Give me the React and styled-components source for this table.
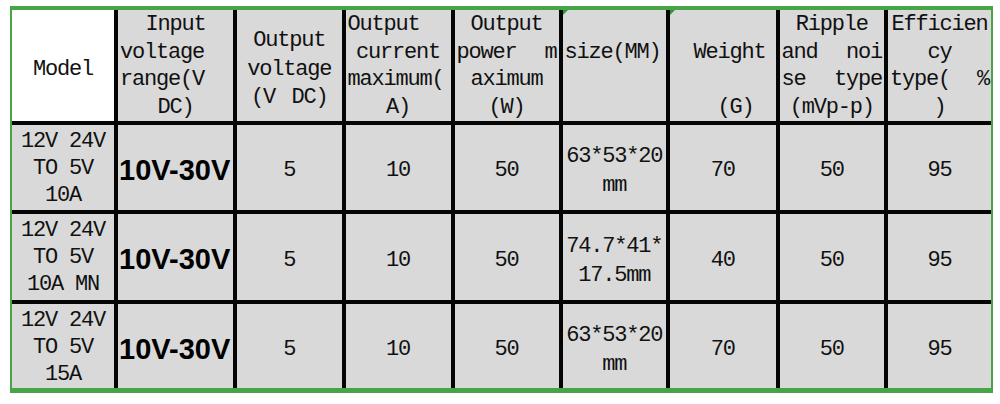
import React from "react";
import styled, { createGlobalStyle } from "styled-components";

const GlobalStyle = createGlobalStyle`
  html, body {
    margin: 0;
    padding: 0;
    background: #ffffff;
  }
  body {
    font-family: "Liberation Mono", "DejaVu Sans Mono", monospace;
    color: #111;
  }
`;

// column widths / row heights measured off the sheet
const COLS = [102, 115, 104.5, 105, 104, 103.5, 105.5, 104.5, 103];
const ROWS = [111, 84.5, 86.5, 84];

const header = [
  { lines: [["Model"]], white: true },
  { lines: [["Input"], ["voltage", "left"], ["range(V", "left"], ["DC)"]] },
  { lines: [["Output"], ["voltage"], ["(V DC)", "justify", 12]] },
  {
    lines: [["Output", "left"], ["current"], ["maximum(", "left"], ["A)"]],
  },
  { lines: [["Output"], ["power m", "justify"], ["aximum"], ["(W)"]] },
  { lines: [[" "], ["size(MM)", "left"], [" "], [" "]], mark: true },
  {
    lines: [[" "], ["Weight", "right", 8], [" "], ["(G) ", "right", 8]],
    mark: true,
  },
  {
    lines: [["Ripple"], ["and noi", "justify"], ["se type", "justify"], ["(mVp-p)"]],
  },
  { lines: [["Efficien"], ["cy"], ["type( %", "justify"], [")"]] },
];

const rows = [
  {
    model: ["12V 24V", "TO 5V", "10A"],
    size: ["63*53*20", "mm"],
    weight: "70",
  },
  {
    model: ["12V 24V", "TO 5V", "10A MN"],
    size: ["74.7*41*", "17.5mm"],
    weight: "40",
  },
  {
    model: ["12V 24V", "TO 5V", "15A"],
    size: ["63*53*20", "mm"],
    weight: "70",
  },
];

const App = () => {
  return (
    <>
      <GlobalStyle />
      <Page>
        <Frame>
          <Sheet>
            {header.map((h, i) => (
              <HeadCell
                key={i}
                $white={h.white}
                $mark={h.mark}
                $full={h.lines.length > 3}
              >
                {h.lines.map(([text, align, pad], j) => (
                  <Line key={j} $align={align} $pad={pad}>
                    {text}
                  </Line>
                ))}
              </HeadCell>
            ))}

            {rows.map((r, i) => (
              <React.Fragment key={i}>
                <BodyCell $lh={27} $top={2}>
                  {r.model.map((t, j) => (
                    <Line key={j}>{t}</Line>
                  ))}
                </BodyCell>
                <RangeCell>10V-30V</RangeCell>
                <BodyCell>5</BodyCell>
                <BodyCell>10</BodyCell>
                <BodyCell>50</BodyCell>
                <BodyCell $lh={29}>
                  {r.size.map((t, j) => (
                    <Line key={j}>{t}</Line>
                  ))}
                </BodyCell>
                <BodyCell>{r.weight}</BodyCell>
                <BodyCell>50</BodyCell>
                <BodyCell>95</BodyCell>
              </React.Fragment>
            ))}
          </Sheet>
        </Frame>
      </Page>
    </>
  );
};

export default App;

const Page = styled.div`
  width: 1000px;
  height: 404px;
  padding: 6px 0 0 10px;
  box-sizing: border-box;
  background: #fff;
`;

const Frame = styled.div`
  display: inline-block;
  border-style: solid;
  border-color: #47a447;
  border-width: 4px 2px 5px 2px;
`;

const Sheet = styled.div`
  display: grid;
  grid-template-columns: ${COLS.map((c) => `${c}px`).join(" ")};
  grid-template-rows: ${ROWS.map((r) => `${r}px`).join(" ")};
  gap: 4px;
  background: #050505;
`;

const Cell = styled.div`
  position: relative;
  display: flex;
  flex-direction: column;
  justify-content: center;
  overflow: hidden;
  background: #d9d9d9;
  font-size: 22px;
  letter-spacing: -1.2px;
  white-space: pre;
`;

const HeadCell = styled(Cell)`
  padding: ${(p) => (p.$full ? "1px 2px 0" : "9px 2px 0")};
  line-height: ${(p) => (p.$full ? "27.5px" : "28.5px")};
  background: ${(p) => (p.$white ? "#ffffff" : "#d9d9d9")};

  &::before {
    content: "";
    display: ${(p) => (p.$mark ? "block" : "none")};
    position: absolute;
    top: 0;
    left: 0;
    border-top: 5px solid #2e9a2e;
    border-right: 5px solid transparent;
  }
`;

const BodyCell = styled(Cell)`
  padding: ${(p) => (p.$top ?? 8)}px 0 0;
  line-height: ${(p) => p.$lh || 28}px;
  text-align: center;
`;

const RangeCell = styled(Cell)`
  padding: 6px 0 0 1px;
  font-family: "Liberation Sans", Arial, sans-serif;
  font-weight: 700;
  font-size: 29px;
  letter-spacing: 0;
  color: #000;
`;

const Line = styled.div`
  padding: 0 ${(p) => (p.$pad ? `${p.$pad}px` : "0")};
  text-align: ${(p) => p.$align || "center"};
  text-align-last: ${(p) => p.$align || "center"};
  white-space: ${(p) => (p.$align === "justify" ? "normal" : "pre")};
`;
